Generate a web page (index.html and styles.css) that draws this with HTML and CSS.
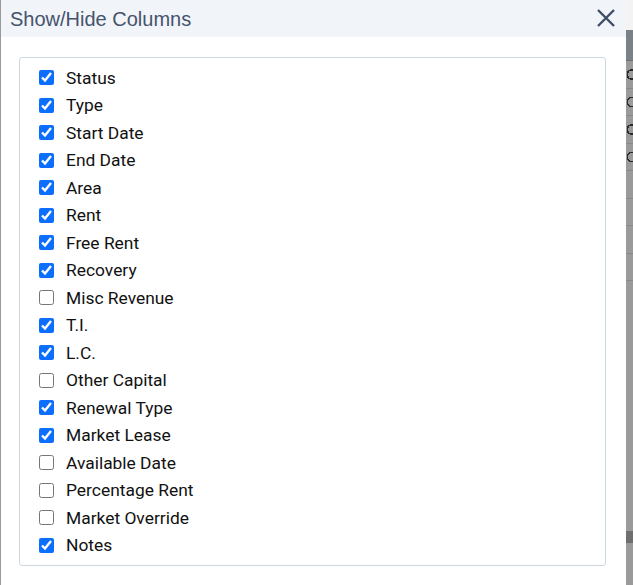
FILE: index.html
```html
<!DOCTYPE html>
<html lang="en">
<head>
    <meta charset="UTF-8">
    <meta name="viewport" content="width=device-width, initial-scale=1.0">
    <title>Show/Hide Columns</title>
    <link rel="stylesheet" href="styles.css">
</head>
<body>
    <div class="page">
        <div class="modal">
            <div class="modal-header">
                <span class="modal-title">Show/Hide Columns</span>
                <button class="close" aria-label="Close">
                    <svg width="20" height="20" viewBox="0 0 20 20">
                        <path d="M2 2 L18 18 M18 2 L2 18" stroke="#3f4d68" stroke-width="2.4" fill="none"/>
                    </svg>
                </button>
            </div>
            <div class="modal-body">
                <div class="column-list">
                    <label class="row"><input type="checkbox" checked> Status</label>
                    <label class="row"><input type="checkbox" checked> Type</label>
                    <label class="row"><input type="checkbox" checked> Start Date</label>
                    <label class="row"><input type="checkbox" checked> End Date</label>
                    <label class="row"><input type="checkbox" checked> Area</label>
                    <label class="row"><input type="checkbox" checked> Rent</label>
                    <label class="row"><input type="checkbox" checked> Free Rent</label>
                    <label class="row"><input type="checkbox" checked> Recovery</label>
                    <label class="row"><input type="checkbox"> Misc Revenue</label>
                    <label class="row"><input type="checkbox" checked> T.I.</label>
                    <label class="row"><input type="checkbox" checked> L.C.</label>
                    <label class="row"><input type="checkbox"> Other Capital</label>
                    <label class="row"><input type="checkbox" checked> Renewal Type</label>
                    <label class="row"><input type="checkbox" checked> Market Lease</label>
                    <label class="row"><input type="checkbox"> Available Date</label>
                    <label class="row"><input type="checkbox"> Percentage Rent</label>
                    <label class="row"><input type="checkbox"> Market Override</label>
                    <label class="row"><input type="checkbox" checked> Notes</label>
                </div>
            </div>
        </div>

        <!-- dimmed grid behind the dialog -->
        <div class="backdrop">
            <div class="bd-top"></div>
            <div class="bd-head"></div>
            <div class="bd-row"></div>
            <div class="bd-row"></div>
            <div class="bd-row"></div>
            <div class="bd-row"></div>
            <div class="bd-row"></div>
            <div class="bd-row"></div>
            <div class="bd-row"></div>
            <div class="bd-row"></div>
            <div class="bd-thumb"></div>
        </div>
    </div>
</body>
</html>
```

FILE: styles.css
```css
body {
    margin: 0;
    background-color: #9a9a9a;
    font-family: Roboto, 'Noto Sans', sans-serif;
}

.page {
    display: flex;
    height: 585px;
    padding-left: 1px;
    overflow: hidden;
}

.modal {
    width: 625px;
    flex: none;
    background-color: #fff;
    display: flex;
    flex-direction: column;
}

.modal-header {
    height: 37px;
    background-color: #f1f5fa;
    display: flex;
    align-items: center;
    justify-content: space-between;
    padding: 0 10px 0 9px;
}

.modal-title {
    font-family: 'Liberation Sans', Arial, sans-serif;
    font-size: 20px;
    color: #46536b;
    margin-top: 1px;
}

.close {
    border: none;
    background: none;
    padding: 0;
    width: 20px;
    height: 20px;
    margin-top: -1px;
    cursor: pointer;
}

.close svg {
    display: block;
}

.modal-body {
    padding: 20px 20px 19px 18px;
}

.column-list {
    border: 1px solid #cbd8df;
    border-radius: 3px;
    padding: 6px 19px;
}

.row {
    height: 27.5px;
    display: flex;
    align-items: center;
    gap: 12px;
    font-size: 17.4px;
    color: #111;
}

.row input {
    width: 15px;
    height: 15px;
    margin: 0;
    accent-color: #0b6efd;
}

/* grid peeking out on the right */
.backdrop {
    flex: 1;
}

.bd-top {
    height: 30px;
    background-color: #f3f3f3;
}

.bd-head {
    height: 30px;
    background-color: #7b8287;
    border-bottom: 1px solid #6b7175;
}

.bd-row {
    height: 26.5px;
    border-bottom: 1px solid #8a8a8a;
}

.bd-row:nth-child(-n+6) {
    background: radial-gradient(circle at 6px 50%, transparent 4px, #2a2a2a 4px, #2a2a2a 5.5px, transparent 5.5px) no-repeat;
}

.bd-thumb {
    height: 12px;
    margin-top: 250px;
    background-color: #6f6f6f;
}
```
